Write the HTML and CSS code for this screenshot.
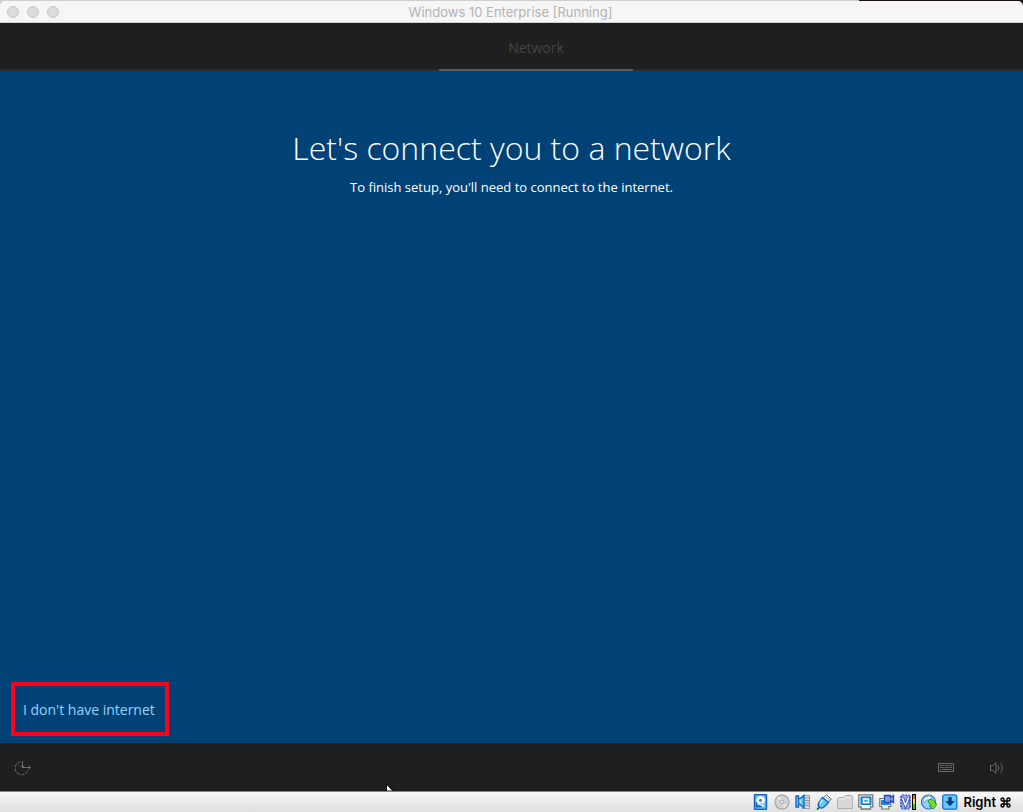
FILE: index.html
```html
<!DOCTYPE html>
<html lang="en">
<head>
<meta charset="utf-8">
<title>Windows 10 Enterprise [Running]</title>
<link rel="stylesheet" href="styles.css">
</head>
<body>
<div class="window">
  <header class="titlebar">
    <div class="lights">
      <button class="light" type="button" aria-label="Close"></button>
      <button class="light" type="button" aria-label="Minimize"></button>
      <button class="light" type="button" aria-label="Zoom"></button>
    </div>
    <span class="title">Windows 10 Enterprise [Running]</span>
  </header>

  <nav class="steps">
    <span class="step">Network</span>
  </nav>

  <main class="page">
    <h1 class="heading">Let's connect you to a network</h1>
    <p class="lead">To finish setup, you'll need to connect to the internet.</p>
    <button class="skip" type="button">I don't have internet</button>
  </main>

  <div class="taskbar">
    <button class="tool" type="button" aria-label="Ease of access">
      <svg width="18" height="18" viewBox="0 0 18 18" fill="none" stroke="#6c6c6c" stroke-width="1">
        <path d="M6.5 2.800A6.500 6.500 0 1 0 14 10.500" stroke-dasharray="3.500 1"/>
        <path d="M8.500 2v6.500H16.500M6.500 6.500l2 2 2-2M14.500 6.500l2 2-2 2"/>
      </svg>
    </button>
    <svg class="cursor" viewBox="0 0 8 7"><path d="M.5 0V7H7z" fill="#fff" stroke="#000"/></svg>
    <div class="tools">
      <button class="tool" type="button" aria-label="Keyboard">
        <svg width="16" height="10" viewBox="0 0 16 10" fill="none" stroke="#6a6a6a">
          <path d="M.5.500h15v8H.5z"/>
          <path d="M2 2.500h12M2 4.500h12" stroke-dasharray="2 .5"/>
          <path d="M2 6.500h1M4 6.500h8M13 6.500h1"/>
        </svg>
      </button>
      <button class="tool" type="button" aria-label="Volume">
        <svg width="16" height="14" viewBox="0 0 16 14" fill="none" stroke="#6a6a6a">
          <path d="M1.500 4.500h2.500L7 1.500v11L4 9.500H1.500z"/>
          <path d="M9 4.500q1.700 2.500 0 5M11.500 2.500q3.500 4.500 0 9"/>
        </svg>
      </button>
    </div>
  </div>

  <footer class="statusbar">
    <svg class="device" viewBox="0 0 16 16">
      <rect x="1.500" y=".5" width="12" height="15" rx="1" fill="#55bdfb" stroke="#1660c0" stroke-width="1.400"/>
      <path d="M7.500 2a4.300 4.300 0 1 0 .1 0M8 8l4 5-5-1.500z" fill="#fff"/>
      <circle cx="7.500" cy="6.300" r="1.500" fill="#2f7fd6"/>
      <path d="M3.500 8.500v4h5" fill="none" stroke="#1756a8" stroke-width="1.300"/>
    </svg>
    <svg class="device" viewBox="0 0 16 16">
      <circle cx="8" cy="8" r="7" fill="#d4d4d4" stroke="#ababab" stroke-width="1.300"/>
      <path d="M8 8L3 4l3-2zM8 8l5 4-3 2z" fill="#e6e6e6"/>
      <circle cx="8" cy="8" r="1.800" fill="#eee" stroke="#a8a8a8"/>
    </svg>
    <svg class="device" viewBox="0 0 16 16">
      <path d="M9 1.500h5.500v13H7v-3h2z" fill="#ddd" stroke="#a0a0a0"/>
      <path d="M10 4h5M10 6.500h5M10 9h5M10 11.500h5" stroke="#909090"/>
      <path d="M1 2h2.500v2.500H5L9 1.500v12L5 10.500H3.500V13H1z" fill="#5ec5ff" stroke="#1269c4" stroke-width="1.400"/>
      <path d="M3.500 4.500v6" stroke="#1269c4"/>
      <path d="M5.500 5.500v4" stroke="#b9eaff"/>
    </svg>
    <svg class="device" viewBox="0 0 16 16">
      <path d="M10.500 .8l4.700 4.200-2.700 3-5-4.200z" fill="#fff" stroke="#666"/>
      <path d="M10.500 3.200l1 .9M12.300 4.700l1 .9" stroke="#333"/>
      <path d="M6.500 3.500l6 5-4.500 4.500q-2.500 1.800-4.500.5Q1.500 11.500 2.500 9z" fill="#65c9ff" stroke="#1269c4" stroke-width="1.400"/>
      <path d="M6.500 5.500L4 9.500" stroke="#d4f4ff" stroke-width="1.500"/>
      <path d="M3 13.500L1 15.500" stroke="#333" stroke-width="1.500"/>
    </svg>
    <svg class="device" viewBox="0 0 16 16">
      <path d="M.5 14.500v-10l1-1h5l2-2h6l1 1v12z" fill="#d8d8d8" stroke="#b2b2b2"/>
      <path d="M1.500 5h6l1.500-1.500h5" fill="none" stroke="#ececec"/>
    </svg>
    <svg class="device" viewBox="0 0 16 16">
      <path d="M.8.800h14v12h-2.300v2.200H3.200v-2.200H.8z" fill="#f5f5f5" stroke="#777" stroke-width="1.300"/>
      <path d="M3 3h10v7.500H3z" fill="#259ff2" stroke="#0f6dcc"/>
      <path d="M5.500 5h5v3.500h-5z" fill="#35a9f5" stroke="#fff" stroke-width="1.300"/>
    </svg>
    <svg class="device" viewBox="0 0 16 16">
      <path d="M.8 4.500h11v8h-2v2.500h-7v-2.500h-2z" fill="#eee" stroke="#777" stroke-width="1.200"/>
      <path d="M2 6h8.500v5H2z" fill="#138cec"/>
      <path d="M5.500 1.500h6v2l3-2v7l-3-2v2h-6z" fill="#7d9eee" stroke="#2c47b4" stroke-width="1.300"/>
    </svg>
    <svg class="device" viewBox="0 0 16 16">
      <path d="M0 3h11M0 6h11M0 9h11M0 12h11" stroke="#3546a2" stroke-width="1.500"/>
      <rect x="1.200" y="1" width="8.600" height="14" rx="1" fill="#8ba2ec" stroke="#354eb4" stroke-dasharray="2 1"/>
      <path d="M2.500 4l3 7.500 3-7.500" fill="none" stroke="#2b45a3" stroke-width="3"/>
      <path d="M2.500 4l3 7.500 3-7.500" fill="none" stroke="#fff" stroke-width="1.500"/>
      <path d="M12 0h4v16h-4z" fill="#000"/>
      <path d="M13 1h2v4h-2z" fill="#ee6b22"/><path d="M13 5h2v5h-2z" fill="#f5e04a"/><path d="M13 10h2v5h-2z" fill="#38c53b"/>
    </svg>
    <svg class="device" viewBox="0 0 16 16">
      <circle cx="7.500" cy="8" r="7" fill="#8fd3ff" stroke="#2c6fc4" stroke-width="1.200"/>
      <path d="M2 7q0-4 5-4.500V1l4 3-4 3V5.500Q4 6 4 9z" fill="#e6f7ff" stroke="#4d96dc" stroke-width=".7"/>
      <path d="M8 5.500q6-.5 6.500 4.500H16l-3.500 5L8 12h2q0-3-3-3.500z" fill="#78de2d" stroke="#2c9630"/>
    </svg>
    <svg class="device" viewBox="0 0 16 16">
      <rect x=".8" y=".8" width="14" height="14.400" rx="2" fill="#67c7ff" stroke="#1a70cc" stroke-width="1.300"/>
      <path d="M6.300 3h3.400v4h3L8 12.200 3.300 7h3z" fill="#0f3a86"/>
    </svg>
    <span class="hostkey">Right <svg class="command" viewBox="0 0 11 11" role="img" aria-label="Command"><path d="M4 4H2.500A1.500 1.500 0 1 1 4 2.500v6A1.500 1.500 0 1 1 2.500 7h6A1.500 1.500 0 1 1 7 8.500v-6A1.500 1.500 0 1 1 8.500 4z" fill="none" stroke="#000" stroke-width="1.400"/></svg></span>
  </footer>
</div>
</body>
</html>
```
FILE: styles.css
```css
* { box-sizing: border-box; }

body {
  margin: 0;
  font-family: "Open Sans", "Noto Sans", sans-serif;
}

button {
  margin: 0;
  padding: 0;
  border: 0;
  background: none;
  font: inherit;
}

svg { display: block; }

.window {
  display: flex;
  flex-direction: column;
  min-height: 100vh;
  padding-top: 1px;
  background: linear-gradient(90deg, #cfcdcf 84%, #1a1418 84%);
}

.titlebar {
  display: grid;
  grid-template-columns: 1fr auto 1fr;
  align-items: center;
  height: 22px;
  padding: 0 9px 0 7px;
  border-bottom: 1px solid #cfcfcf;
  border-radius: 5px 5px 0 0;
  background: #f6f6f6;
}

.lights {
  display: flex;
  gap: 8px;
}

.light {
  width: 12px;
  height: 12px;
  border: 1px solid #c8c8c8;
  border-radius: 50%;
  background: #dcdcdc;
}

.title {
  padding-top: 1px;
  color: #b4b4b4;
  font-family: Inter, sans-serif;
  font-size: 13px;
  line-height: 20px;
}

.steps {
  display: flex;
  justify-content: center;
  height: 48px;
  padding-left: 49px;
  border-bottom: 2px solid #2b2b2b;
  background: #1f1f1f;
}

.step {
  width: 194px;
  height: 48px;
  border-bottom: 2px solid #5a5a5a;
  color: #444;
  font-size: 14px;
  line-height: 50px;
  text-align: center;
}

.page {
  display: flex;
  flex: 1;
  flex-direction: column;
  align-items: center;
  padding: 52px 11px 7px;
  background: #004275;
  color: #fff;
}

.heading {
  margin: 0;
  font-size: 32px;
  font-weight: 300;
  line-height: 50px;
}

.lead {
  margin: 4px 0 0;
  font-size: 13px;
  line-height: 20px;
}

.skip {
  align-self: flex-start;
  margin-top: auto;
  padding: 13px 10px 11px 8px;
  border: 4px solid #ff0019;
  color: #99d2ff;
  font-size: 14px;
  line-height: 22px;
}

.taskbar {
  display: flex;
  position: relative;
  align-items: center;
  justify-content: space-between;
  height: 48px;
  padding: 2px 18px 0 14px;
  background: #1f1f1f;
}

.tools {
  display: flex;
  align-items: center;
  gap: 35px;
}

.cursor {
  position: absolute;
  bottom: 0;
  left: 386px;
  width: 8px;
  height: 7px;
}

.statusbar {
  display: flex;
  align-items: center;
  justify-content: flex-end;
  gap: 5px;
  height: 21px;
  padding-right: 12px;
  border-top: 1px solid #858585;
  background: linear-gradient(#f8f8f8, #dedede);
}

.device {
  width: 16px;
  height: 16px;
}

.hostkey {
  display: flex;
  align-items: center;
  gap: 4px;
  color: #000;
  font-family: Inter, sans-serif;
  font-size: 13px;
  font-weight: 600;
  line-height: 20px;
}

.command {
  width: 11px;
  height: 11px;
}
```
